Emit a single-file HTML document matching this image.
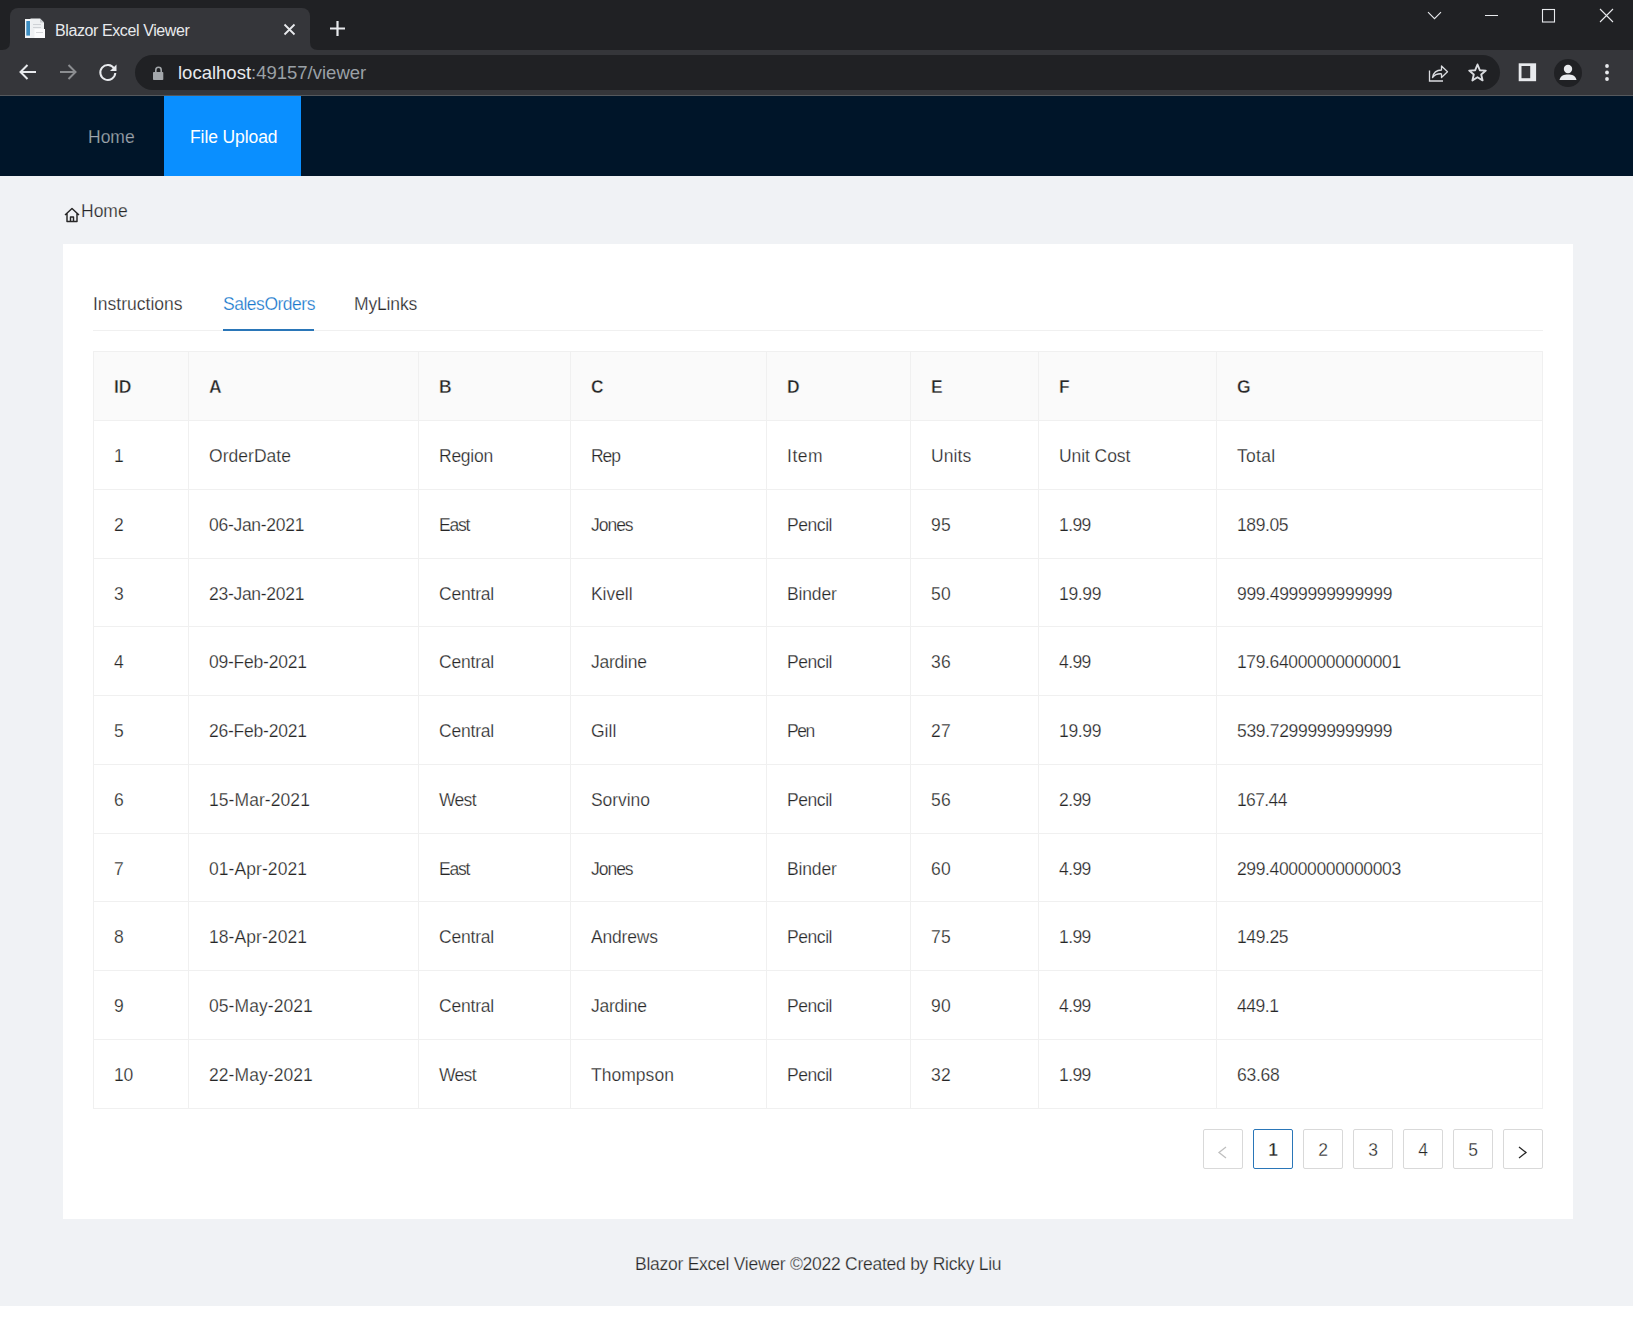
<!DOCTYPE html>
<html><head><meta charset="utf-8"><title>Blazor Excel Viewer</title>
<style>
html,body{margin:0;padding:0;}
body{width:1633px;height:1322px;position:relative;overflow:hidden;background:#ffffff;font-family:"Liberation Sans",sans-serif;}
.r{position:absolute;display:block;}
.t{position:absolute;white-space:nowrap;line-height:20px;font-family:"Liberation Sans",sans-serif;}
</style></head><body>
<div class="r" style="left:0px;top:0px;width:1633px;height:50px;background:#202124;"></div>
<div class="r" style="left:0px;top:50px;width:1633px;height:45px;background:#35363a;"></div>
<div class="r" style="left:0px;top:95px;width:1633px;height:1px;background:#55585c;"></div>
<div class="r" style="left:10px;top:8px;width:300px;height:43px;background:#35363a;border-radius:8px 8px 0 0;"></div>
<svg class="r" style="left:2px;top:42px" width="8" height="8"><path d="M0 8 Q8 8 8 0 L8 8 Z" fill="#35363a"/></svg>
<svg class="r" style="left:310px;top:42px" width="8" height="8"><path d="M8 8 Q0 8 0 0 L0 8 Z" fill="#35363a"/></svg>
<svg class="r" style="left:24px;top:17px" width="22" height="22" viewBox="0 0 22 22">
<rect x="1" y="2" width="6.5" height="19" fill="#f4f6f8"/>
<rect x="2.3" y="4" width="3.7" height="14.6" fill="#3d8ec2"/>
<path d="M6.5 1.5 H16 L20 5.5 V21 H6.5 Z" fill="#eef0f2"/>
<path d="M16 1.5 V5.5 H20 Z" fill="#c9ccd0"/>
<rect x="9" y="7" width="8" height="1" fill="#cfd2d6"/>
<rect x="9" y="10" width="8" height="1" fill="#cfd2d6"/>
<rect x="10.5" y="12" width="10.5" height="9" fill="#fbfbfc"/>
<rect x="12" y="15" width="7" height="1" fill="#d4d6d9"/>
</svg>
<div class="t" style="left:55px;top:21px;font-size:16px;color:#e8eaed;letter-spacing:-0.4px;">Blazor Excel Viewer</div>
<svg class="r" style="left:283px;top:23px" width="13" height="13" viewBox="0 0 13 13"><path d="M1.5 1.5 L11.5 11.5 M11.5 1.5 L1.5 11.5" stroke="#e8eaed" stroke-width="1.8"/></svg>
<svg class="r" style="left:329px;top:20px" width="17" height="17" viewBox="0 0 17 17"><path d="M8.5 1 V16 M1 8.5 H16" stroke="#e8eaed" stroke-width="2.2"/></svg>
<svg class="r" style="left:1426px;top:10px" width="17" height="12" viewBox="0 0 17 12"><path d="M2 2.2 L8.5 8.7 L15 2.2" stroke="#e8eaed" stroke-width="1.1" fill="none"/></svg>
<div class="r" style="left:1485px;top:15px;width:13px;height:1px;background:#e8eaed;"></div>
<svg class="r" style="left:1541px;top:8px" width="15" height="15" viewBox="0 0 15 15"><rect x="1.5" y="1.5" width="12" height="12.5" stroke="#e8eaed" stroke-width="1.1" fill="none"/></svg>
<svg class="r" style="left:1599px;top:8px" width="15" height="15" viewBox="0 0 15 15"><path d="M1 1 L14 14 M14 1 L1 14" stroke="#e8eaed" stroke-width="1.1"/></svg>
<svg class="r" style="left:17px;top:62px" width="22" height="20" viewBox="0 0 22 20"><path d="M19 10 H4 M10.5 3 L3.5 10 L10.5 17" stroke="#e8eaed" stroke-width="2" fill="none"/></svg>
<svg class="r" style="left:57px;top:62px" width="22" height="20" viewBox="0 0 22 20"><path d="M3 10 H18 M11.5 3 L18.5 10 L11.5 17" stroke="#8b8d90" stroke-width="2" fill="none"/></svg>
<svg class="r" style="left:97px;top:62px" width="22" height="21" viewBox="0 0 22 21"><path d="M17.2 6.5 A7.5 7.5 0 1 0 18.3 11" stroke="#e8eaed" stroke-width="2" fill="none"/><path d="M19.5 2.5 V9 H13 Z" fill="#e8eaed"/></svg>
<div class="r" style="left:135px;top:55px;width:1365px;height:35px;background:#202124;border-radius:18px;"></div>
<svg class="r" style="left:151px;top:65px" width="14" height="16" viewBox="0 0 14 16"><path d="M4.8 7.5 V5 A2.7 2.7 0 0 1 10.2 5 V7.5" stroke="#a3a7ab" stroke-width="1.6" fill="none"/><rect x="2" y="7" width="10.3" height="8" rx="0.8" fill="#a3a7ab"/></svg>
<div class="t" style="left:178px;top:63px;font-size:18.5px;color:#9aa0a6;"><span style="color:#e8eaed">localhost</span>:49157/viewer</div>
<svg class="r" style="left:1427px;top:62px" width="22" height="21" viewBox="0 0 22 21"><path d="M2.5 8.5 V19 H16" stroke="#dadce0" stroke-width="1.3" fill="none"/><path d="M5.5 15.5 C6.5 10 10 8 14.5 8 V4 L20.5 9.8 L14.5 15.5 V11.8 C10.5 11.5 7.5 12.8 5.5 15.5 Z" stroke="#dadce0" stroke-width="1.3" fill="none" stroke-linejoin="round"/></svg>
<svg class="r" style="left:1467px;top:62px" width="21" height="21" viewBox="0 0 21 21"><path d="M10.5 2.5 L12.8 8.2 L18.8 8.6 L14.2 12.5 L15.6 18.4 L10.5 15.2 L5.4 18.4 L6.8 12.5 L2.2 8.6 L8.2 8.2 Z" stroke="#dadce0" stroke-width="1.9" fill="none" stroke-linejoin="round"/></svg>
<svg class="r" style="left:1518px;top:63px" width="19" height="19" viewBox="0 0 19 19"><rect x="0.7" y="0.3" width="17.4" height="17.9" fill="#e8eaed"/><rect x="3.5" y="3" width="8.7" height="12.2" fill="#35363a"/></svg>
<svg class="r" style="left:1553px;top:58px" width="30" height="30" viewBox="0 0 30 30"><circle cx="15" cy="15" r="14" fill="#202124"/><circle cx="15" cy="11" r="4.2" fill="#e8eaed"/><path d="M6.5 22 C7.5 17.5 11 16.5 15 16.5 C19 16.5 22.5 17.5 23.5 22 Z" fill="#e8eaed"/></svg>
<svg class="r" style="left:1603px;top:63px" width="8" height="19" viewBox="0 0 8 19"><circle cx="4" cy="3" r="1.9" fill="#e8eaed"/><circle cx="4" cy="9.5" r="1.9" fill="#e8eaed"/><circle cx="4" cy="16" r="1.9" fill="#e8eaed"/></svg>
<div class="r" style="left:0px;top:96px;width:1633px;height:80px;background:#001529;"></div>
<div class="r" style="left:164px;top:96px;width:137px;height:80px;background:#0a8fff;"></div>
<div class="t" style="left:88px;top:127px;font-size:17.5px;color:rgba(255,255,255,0.65);-webkit-text-stroke:0.25px #001529;">Home</div>
<div class="t" style="left:190px;top:127px;font-size:17.5px;color:#ffffff;letter-spacing:-0.1px;">File Upload</div>
<div class="r" style="left:0px;top:176px;width:1633px;height:1130px;background:#f0f2f5;"></div>
<svg class="r" style="left:63px;top:206px" width="18" height="18" viewBox="0 0 18 18"><path d="M2 9 L9 2.5 L16 9 M4 7.5 V15.5 H14 V7.5 M7.5 15.5 V11 H10.5 V15.5" stroke="#262626" stroke-width="1.45" fill="none" stroke-linejoin="round"/></svg>
<div class="t" style="left:81px;top:201px;font-size:17.5px;color:#262626;-webkit-text-stroke:0.25px #f0f2f5;">Home</div>
<div class="r" style="left:63px;top:244px;width:1510px;height:975px;background:#ffffff;"></div>
<div class="t" style="left:93px;top:294px;font-size:17.5px;color:#262626;-webkit-text-stroke:0.25px #ffffff;">Instructions</div>
<div class="t" style="left:223px;top:294px;font-size:17.5px;color:#1677cc;-webkit-text-stroke:0.25px #ffffff;letter-spacing:-0.48px;">SalesOrders</div>
<div class="t" style="left:354px;top:294px;font-size:17.5px;color:#262626;-webkit-text-stroke:0.25px #ffffff;letter-spacing:-0.15px;">MyLinks</div>
<div class="r" style="left:93px;top:330px;width:1450px;height:1px;background:#f0f0f0;"></div>
<div class="r" style="left:223px;top:329px;width:91px;height:2px;background:#2a76b8;"></div>
<div class="r" style="left:94px;top:352px;width:1448px;height:68px;background:#fafafa;"></div>
<div class="r" style="left:93px;top:351px;width:1px;height:758px;background:#f0f0f0;"></div>
<div class="r" style="left:188px;top:351px;width:1px;height:758px;background:#f0f0f0;"></div>
<div class="r" style="left:418px;top:351px;width:1px;height:758px;background:#f0f0f0;"></div>
<div class="r" style="left:570px;top:351px;width:1px;height:758px;background:#f0f0f0;"></div>
<div class="r" style="left:766px;top:351px;width:1px;height:758px;background:#f0f0f0;"></div>
<div class="r" style="left:910px;top:351px;width:1px;height:758px;background:#f0f0f0;"></div>
<div class="r" style="left:1038px;top:351px;width:1px;height:758px;background:#f0f0f0;"></div>
<div class="r" style="left:1216px;top:351px;width:1px;height:758px;background:#f0f0f0;"></div>
<div class="r" style="left:1542px;top:351px;width:1px;height:758px;background:#f0f0f0;"></div>
<div class="r" style="left:93px;top:351px;width:1450px;height:1px;background:#f0f0f0;"></div>
<div class="r" style="left:93px;top:420px;width:1450px;height:1px;background:#f0f0f0;"></div>
<div class="r" style="left:93px;top:489px;width:1450px;height:1px;background:#f0f0f0;"></div>
<div class="r" style="left:93px;top:558px;width:1450px;height:1px;background:#f0f0f0;"></div>
<div class="r" style="left:93px;top:626px;width:1450px;height:1px;background:#f0f0f0;"></div>
<div class="r" style="left:93px;top:695px;width:1450px;height:1px;background:#f0f0f0;"></div>
<div class="r" style="left:93px;top:764px;width:1450px;height:1px;background:#f0f0f0;"></div>
<div class="r" style="left:93px;top:833px;width:1450px;height:1px;background:#f0f0f0;"></div>
<div class="r" style="left:93px;top:901px;width:1450px;height:1px;background:#f0f0f0;"></div>
<div class="r" style="left:93px;top:970px;width:1450px;height:1px;background:#f0f0f0;"></div>
<div class="r" style="left:93px;top:1039px;width:1450px;height:1px;background:#f0f0f0;"></div>
<div class="r" style="left:93px;top:1108px;width:1450px;height:1px;background:#f0f0f0;"></div>
<div class="t" style="left:114px;top:377px;font-size:17.5px;color:#262626;-webkit-text-stroke:0.4px #fafafa;font-weight:700;">ID</div>
<div class="t" style="left:209px;top:377px;font-size:17.5px;color:#262626;-webkit-text-stroke:0.4px #fafafa;font-weight:700;">A</div>
<div class="t" style="left:439px;top:377px;font-size:17.5px;color:#262626;-webkit-text-stroke:0.4px #fafafa;font-weight:700;">B</div>
<div class="t" style="left:591px;top:377px;font-size:17.5px;color:#262626;-webkit-text-stroke:0.4px #fafafa;font-weight:700;">C</div>
<div class="t" style="left:787px;top:377px;font-size:17.5px;color:#262626;-webkit-text-stroke:0.4px #fafafa;font-weight:700;">D</div>
<div class="t" style="left:931px;top:377px;font-size:17.5px;color:#262626;-webkit-text-stroke:0.4px #fafafa;font-weight:700;">E</div>
<div class="t" style="left:1059px;top:377px;font-size:17.5px;color:#262626;-webkit-text-stroke:0.4px #fafafa;font-weight:700;">F</div>
<div class="t" style="left:1237px;top:377px;font-size:17.5px;color:#262626;-webkit-text-stroke:0.4px #fafafa;font-weight:700;">G</div>
<div class="t" style="left:114px;top:446px;font-size:17.5px;color:#262626;-webkit-text-stroke:0.25px #ffffff;letter-spacing:-0.3px;">1</div>
<div class="t" style="left:209px;top:446px;font-size:17.5px;color:#262626;-webkit-text-stroke:0.25px #ffffff;letter-spacing:0.038px;">OrderDate</div>
<div class="t" style="left:439px;top:446px;font-size:17.5px;color:#262626;-webkit-text-stroke:0.25px #ffffff;letter-spacing:-0.26px;">Region</div>
<div class="t" style="left:591px;top:446px;font-size:17.5px;color:#262626;-webkit-text-stroke:0.25px #ffffff;letter-spacing:-1.05px;">Rep</div>
<div class="t" style="left:787px;top:446px;font-size:17.5px;color:#262626;-webkit-text-stroke:0.25px #ffffff;letter-spacing:0.533px;">Item</div>
<div class="t" style="left:931px;top:446px;font-size:17.5px;color:#262626;-webkit-text-stroke:0.25px #ffffff;letter-spacing:0.075px;">Units</div>
<div class="t" style="left:1059px;top:446px;font-size:17.5px;color:#262626;-webkit-text-stroke:0.25px #ffffff;letter-spacing:-0.075px;">Unit Cost</div>
<div class="t" style="left:1237px;top:446px;font-size:17.5px;color:#262626;-webkit-text-stroke:0.25px #ffffff;letter-spacing:0.3px;">Total</div>
<div class="t" style="left:114px;top:515px;font-size:17.5px;color:#262626;-webkit-text-stroke:0.25px #ffffff;letter-spacing:-0.3px;">2</div>
<div class="t" style="left:209px;top:515px;font-size:17.5px;color:#262626;-webkit-text-stroke:0.25px #ffffff;letter-spacing:-0.29px;">06-Jan-2021</div>
<div class="t" style="left:439px;top:515px;font-size:17.5px;color:#262626;-webkit-text-stroke:0.25px #ffffff;letter-spacing:-1.233px;">East</div>
<div class="t" style="left:591px;top:515px;font-size:17.5px;color:#262626;-webkit-text-stroke:0.25px #ffffff;letter-spacing:-1.025px;">Jones</div>
<div class="t" style="left:787px;top:515px;font-size:17.5px;color:#262626;-webkit-text-stroke:0.25px #ffffff;letter-spacing:-0.44px;">Pencil</div>
<div class="t" style="left:931px;top:515px;font-size:17.5px;color:#262626;-webkit-text-stroke:0.25px #ffffff;letter-spacing:0.2px;">95</div>
<div class="t" style="left:1059px;top:515px;font-size:17.5px;color:#262626;-webkit-text-stroke:0.25px #ffffff;letter-spacing:-0.6px;">1.99</div>
<div class="t" style="left:1237px;top:515px;font-size:17.5px;color:#262626;-webkit-text-stroke:0.25px #ffffff;letter-spacing:-0.42px;">189.05</div>
<div class="t" style="left:114px;top:584px;font-size:17.5px;color:#262626;-webkit-text-stroke:0.25px #ffffff;letter-spacing:-0.3px;">3</div>
<div class="t" style="left:209px;top:584px;font-size:17.5px;color:#262626;-webkit-text-stroke:0.25px #ffffff;letter-spacing:-0.29px;">23-Jan-2021</div>
<div class="t" style="left:439px;top:584px;font-size:17.5px;color:#262626;-webkit-text-stroke:0.25px #ffffff;letter-spacing:-0.2px;">Central</div>
<div class="t" style="left:591px;top:584px;font-size:17.5px;color:#262626;-webkit-text-stroke:0.25px #ffffff;letter-spacing:-0.06px;">Kivell</div>
<div class="t" style="left:787px;top:584px;font-size:17.5px;color:#262626;-webkit-text-stroke:0.25px #ffffff;letter-spacing:-0.14px;">Binder</div>
<div class="t" style="left:931px;top:584px;font-size:17.5px;color:#262626;-webkit-text-stroke:0.25px #ffffff;letter-spacing:0.2px;">50</div>
<div class="t" style="left:1059px;top:584px;font-size:17.5px;color:#262626;-webkit-text-stroke:0.25px #ffffff;letter-spacing:-0.35px;">19.99</div>
<div class="t" style="left:1237px;top:584px;font-size:17.5px;color:#262626;-webkit-text-stroke:0.25px #ffffff;letter-spacing:-0.325px;">999.4999999999999</div>
<div class="t" style="left:114px;top:652px;font-size:17.5px;color:#262626;-webkit-text-stroke:0.25px #ffffff;letter-spacing:-0.3px;">4</div>
<div class="t" style="left:209px;top:652px;font-size:17.5px;color:#262626;-webkit-text-stroke:0.25px #ffffff;letter-spacing:-0.23px;">09-Feb-2021</div>
<div class="t" style="left:439px;top:652px;font-size:17.5px;color:#262626;-webkit-text-stroke:0.25px #ffffff;letter-spacing:-0.2px;">Central</div>
<div class="t" style="left:591px;top:652px;font-size:17.5px;color:#262626;-webkit-text-stroke:0.25px #ffffff;letter-spacing:-0.233px;">Jardine</div>
<div class="t" style="left:787px;top:652px;font-size:17.5px;color:#262626;-webkit-text-stroke:0.25px #ffffff;letter-spacing:-0.44px;">Pencil</div>
<div class="t" style="left:931px;top:652px;font-size:17.5px;color:#262626;-webkit-text-stroke:0.25px #ffffff;letter-spacing:0.2px;">36</div>
<div class="t" style="left:1059px;top:652px;font-size:17.5px;color:#262626;-webkit-text-stroke:0.25px #ffffff;letter-spacing:-0.6px;">4.99</div>
<div class="t" style="left:1237px;top:652px;font-size:17.5px;color:#262626;-webkit-text-stroke:0.25px #ffffff;letter-spacing:-0.365px;">179.64000000000001</div>
<div class="t" style="left:114px;top:721px;font-size:17.5px;color:#262626;-webkit-text-stroke:0.25px #ffffff;letter-spacing:-0.3px;">5</div>
<div class="t" style="left:209px;top:721px;font-size:17.5px;color:#262626;-webkit-text-stroke:0.25px #ffffff;letter-spacing:-0.23px;">26-Feb-2021</div>
<div class="t" style="left:439px;top:721px;font-size:17.5px;color:#262626;-webkit-text-stroke:0.25px #ffffff;letter-spacing:-0.2px;">Central</div>
<div class="t" style="left:591px;top:721px;font-size:17.5px;color:#262626;-webkit-text-stroke:0.25px #ffffff;letter-spacing:0.0px;">Gill</div>
<div class="t" style="left:787px;top:721px;font-size:17.5px;color:#262626;-webkit-text-stroke:0.25px #ffffff;letter-spacing:-1.5px;">Pen</div>
<div class="t" style="left:931px;top:721px;font-size:17.5px;color:#262626;-webkit-text-stroke:0.25px #ffffff;letter-spacing:0.2px;">27</div>
<div class="t" style="left:1059px;top:721px;font-size:17.5px;color:#262626;-webkit-text-stroke:0.25px #ffffff;letter-spacing:-0.35px;">19.99</div>
<div class="t" style="left:1237px;top:721px;font-size:17.5px;color:#262626;-webkit-text-stroke:0.25px #ffffff;letter-spacing:-0.325px;">539.7299999999999</div>
<div class="t" style="left:114px;top:790px;font-size:17.5px;color:#262626;-webkit-text-stroke:0.25px #ffffff;letter-spacing:-0.3px;">6</div>
<div class="t" style="left:209px;top:790px;font-size:17.5px;color:#262626;-webkit-text-stroke:0.25px #ffffff;letter-spacing:0.07px;">15-Mar-2021</div>
<div class="t" style="left:439px;top:790px;font-size:17.5px;color:#262626;-webkit-text-stroke:0.25px #ffffff;letter-spacing:-0.667px;">West</div>
<div class="t" style="left:591px;top:790px;font-size:17.5px;color:#262626;-webkit-text-stroke:0.25px #ffffff;letter-spacing:-0.067px;">Sorvino</div>
<div class="t" style="left:787px;top:790px;font-size:17.5px;color:#262626;-webkit-text-stroke:0.25px #ffffff;letter-spacing:-0.44px;">Pencil</div>
<div class="t" style="left:931px;top:790px;font-size:17.5px;color:#262626;-webkit-text-stroke:0.25px #ffffff;letter-spacing:0.2px;">56</div>
<div class="t" style="left:1059px;top:790px;font-size:17.5px;color:#262626;-webkit-text-stroke:0.25px #ffffff;letter-spacing:-0.6px;">2.99</div>
<div class="t" style="left:1237px;top:790px;font-size:17.5px;color:#262626;-webkit-text-stroke:0.25px #ffffff;letter-spacing:-0.62px;">167.44</div>
<div class="t" style="left:114px;top:859px;font-size:17.5px;color:#262626;-webkit-text-stroke:0.25px #ffffff;letter-spacing:-0.3px;">7</div>
<div class="t" style="left:209px;top:859px;font-size:17.5px;color:#262626;-webkit-text-stroke:0.25px #ffffff;letter-spacing:0.07px;">01-Apr-2021</div>
<div class="t" style="left:439px;top:859px;font-size:17.5px;color:#262626;-webkit-text-stroke:0.25px #ffffff;letter-spacing:-1.233px;">East</div>
<div class="t" style="left:591px;top:859px;font-size:17.5px;color:#262626;-webkit-text-stroke:0.25px #ffffff;letter-spacing:-1.025px;">Jones</div>
<div class="t" style="left:787px;top:859px;font-size:17.5px;color:#262626;-webkit-text-stroke:0.25px #ffffff;letter-spacing:-0.14px;">Binder</div>
<div class="t" style="left:931px;top:859px;font-size:17.5px;color:#262626;-webkit-text-stroke:0.25px #ffffff;letter-spacing:0.2px;">60</div>
<div class="t" style="left:1059px;top:859px;font-size:17.5px;color:#262626;-webkit-text-stroke:0.25px #ffffff;letter-spacing:-0.6px;">4.99</div>
<div class="t" style="left:1237px;top:859px;font-size:17.5px;color:#262626;-webkit-text-stroke:0.25px #ffffff;letter-spacing:-0.365px;">299.40000000000003</div>
<div class="t" style="left:114px;top:927px;font-size:17.5px;color:#262626;-webkit-text-stroke:0.25px #ffffff;letter-spacing:-0.3px;">8</div>
<div class="t" style="left:209px;top:927px;font-size:17.5px;color:#262626;-webkit-text-stroke:0.25px #ffffff;letter-spacing:0.07px;">18-Apr-2021</div>
<div class="t" style="left:439px;top:927px;font-size:17.5px;color:#262626;-webkit-text-stroke:0.25px #ffffff;letter-spacing:-0.2px;">Central</div>
<div class="t" style="left:591px;top:927px;font-size:17.5px;color:#262626;-webkit-text-stroke:0.25px #ffffff;letter-spacing:-0.2px;">Andrews</div>
<div class="t" style="left:787px;top:927px;font-size:17.5px;color:#262626;-webkit-text-stroke:0.25px #ffffff;letter-spacing:-0.44px;">Pencil</div>
<div class="t" style="left:931px;top:927px;font-size:17.5px;color:#262626;-webkit-text-stroke:0.25px #ffffff;letter-spacing:0.2px;">75</div>
<div class="t" style="left:1059px;top:927px;font-size:17.5px;color:#262626;-webkit-text-stroke:0.25px #ffffff;letter-spacing:-0.6px;">1.99</div>
<div class="t" style="left:1237px;top:927px;font-size:17.5px;color:#262626;-webkit-text-stroke:0.25px #ffffff;letter-spacing:-0.42px;">149.25</div>
<div class="t" style="left:114px;top:996px;font-size:17.5px;color:#262626;-webkit-text-stroke:0.25px #ffffff;letter-spacing:-0.3px;">9</div>
<div class="t" style="left:209px;top:996px;font-size:17.5px;color:#262626;-webkit-text-stroke:0.25px #ffffff;letter-spacing:0.07px;">05-May-2021</div>
<div class="t" style="left:439px;top:996px;font-size:17.5px;color:#262626;-webkit-text-stroke:0.25px #ffffff;letter-spacing:-0.2px;">Central</div>
<div class="t" style="left:591px;top:996px;font-size:17.5px;color:#262626;-webkit-text-stroke:0.25px #ffffff;letter-spacing:-0.233px;">Jardine</div>
<div class="t" style="left:787px;top:996px;font-size:17.5px;color:#262626;-webkit-text-stroke:0.25px #ffffff;letter-spacing:-0.44px;">Pencil</div>
<div class="t" style="left:931px;top:996px;font-size:17.5px;color:#262626;-webkit-text-stroke:0.25px #ffffff;letter-spacing:0.2px;">90</div>
<div class="t" style="left:1059px;top:996px;font-size:17.5px;color:#262626;-webkit-text-stroke:0.25px #ffffff;letter-spacing:-0.6px;">4.99</div>
<div class="t" style="left:1237px;top:996px;font-size:17.5px;color:#262626;-webkit-text-stroke:0.25px #ffffff;letter-spacing:-0.475px;">449.1</div>
<div class="t" style="left:114px;top:1065px;font-size:17.5px;color:#262626;-webkit-text-stroke:0.25px #ffffff;letter-spacing:-0.3px;">10</div>
<div class="t" style="left:209px;top:1065px;font-size:17.5px;color:#262626;-webkit-text-stroke:0.25px #ffffff;letter-spacing:0.07px;">22-May-2021</div>
<div class="t" style="left:439px;top:1065px;font-size:17.5px;color:#262626;-webkit-text-stroke:0.25px #ffffff;letter-spacing:-0.667px;">West</div>
<div class="t" style="left:591px;top:1065px;font-size:17.5px;color:#262626;-webkit-text-stroke:0.25px #ffffff;letter-spacing:0.029px;">Thompson</div>
<div class="t" style="left:787px;top:1065px;font-size:17.5px;color:#262626;-webkit-text-stroke:0.25px #ffffff;letter-spacing:-0.44px;">Pencil</div>
<div class="t" style="left:931px;top:1065px;font-size:17.5px;color:#262626;-webkit-text-stroke:0.25px #ffffff;letter-spacing:0.2px;">32</div>
<div class="t" style="left:1059px;top:1065px;font-size:17.5px;color:#262626;-webkit-text-stroke:0.25px #ffffff;letter-spacing:-0.6px;">1.99</div>
<div class="t" style="left:1237px;top:1065px;font-size:17.5px;color:#262626;-webkit-text-stroke:0.25px #ffffff;letter-spacing:-0.275px;">63.68</div>
<div class="r" style="left:1203px;top:1129px;width:40px;height:40px;background:#fff;box-sizing:border-box;border:1px solid #d9d9d9;border-radius:2px;"></div>
<div class="r" style="left:1253px;top:1129px;width:40px;height:40px;background:#fff;box-sizing:border-box;border:1px solid #2a76b8;border-radius:2px;"></div>
<div class="r" style="left:1303px;top:1129px;width:40px;height:40px;background:#fff;box-sizing:border-box;border:1px solid #d9d9d9;border-radius:2px;"></div>
<div class="r" style="left:1353px;top:1129px;width:40px;height:40px;background:#fff;box-sizing:border-box;border:1px solid #d9d9d9;border-radius:2px;"></div>
<div class="r" style="left:1403px;top:1129px;width:40px;height:40px;background:#fff;box-sizing:border-box;border:1px solid #d9d9d9;border-radius:2px;"></div>
<div class="r" style="left:1453px;top:1129px;width:40px;height:40px;background:#fff;box-sizing:border-box;border:1px solid #d9d9d9;border-radius:2px;"></div>
<div class="r" style="left:1503px;top:1129px;width:40px;height:40px;background:#fff;box-sizing:border-box;border:1px solid #d9d9d9;border-radius:2px;"></div>
<div class="t" style="left:1253px;top:1140px;width:40px;text-align:center;font-size:17.5px;color:#262626;font-weight:700;-webkit-text-stroke:0.45px #fff">1</div>
<div class="t" style="left:1303px;top:1140px;width:40px;text-align:center;font-size:17.5px;color:#262626;-webkit-text-stroke:0.3px #fff">2</div>
<div class="t" style="left:1353px;top:1140px;width:40px;text-align:center;font-size:17.5px;color:#262626;-webkit-text-stroke:0.3px #fff">3</div>
<div class="t" style="left:1403px;top:1140px;width:40px;text-align:center;font-size:17.5px;color:#262626;-webkit-text-stroke:0.3px #fff">4</div>
<div class="t" style="left:1453px;top:1140px;width:40px;text-align:center;font-size:17.5px;color:#262626;-webkit-text-stroke:0.3px #fff">5</div>
<svg class="r" style="left:1216px;top:1145px" width="14" height="16" viewBox="0 0 14 16"><path d="M10 2 L3 7.5 L10 13" stroke="#bfbfbf" stroke-width="1.3" fill="none"/></svg>
<svg class="r" style="left:1516px;top:1145px" width="14" height="16" viewBox="0 0 14 16"><path d="M3 2 L10 7.5 L3 13" stroke="#262626" stroke-width="1.3" fill="none"/></svg>
<div class="t" style="left:635px;top:1254px;font-size:17.5px;color:#262626;-webkit-text-stroke:0.25px #f0f2f5;letter-spacing:-0.26px;">Blazor Excel Viewer ©2022 Created by Ricky Liu</div>
</body></html>
